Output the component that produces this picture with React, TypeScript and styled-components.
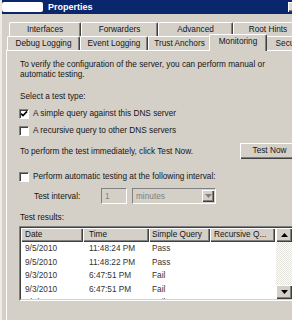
import React from 'react';
import styled, { createGlobalStyle, css } from 'styled-components';

const FACE = '#d4d0c8';
const SHADOW = '#808080';
const DARK = '#404040';

type Result = { date: string; time: string; simple: string; recursive: string };

const results: Result[] = [
  { date: '9/5/2010', time: '11:48:24 PM', simple: 'Pass', recursive: '' },
  { date: '9/5/2010', time: '11:48:22 PM', simple: 'Pass', recursive: '' },
  { date: '9/3/2010', time: '6:47:51 PM', simple: 'Fail', recursive: '' },
  { date: '9/3/2010', time: '6:47:51 PM', simple: 'Fail', recursive: '' },
  { date: '9/3/2010', time: '6:47:51 PM', simple: 'Fail', recursive: '' },
];

const topTabs = [
  { label: 'Interfaces', width: 72 },
  { label: 'Forwarders', width: 77 },
  { label: 'Advanced', width: 75 },
  { label: 'Root Hints', width: 70 },
];

const bottomTabs = [
  { label: 'Debug Logging', width: 73 },
  { label: 'Event Logging', width: 68 },
  { label: 'Trust Anchors', width: 63 },
  { label: 'Monitoring', width: 54, selected: true },
  { label: 'Secu', width: 40 },
];

const columns = [
  { label: 'Date', width: 62, pad: 4 },
  { label: 'Time', width: 66, pad: 6 },
  { label: 'Simple Query', width: 61, pad: 3 },
  { label: 'Recursive Q...', width: 65, pad: 4 },
];

function CheckBox({ checked }: { checked?: boolean }) {
  return (
    <Box>
      {checked && (
        <svg width="8" height="8" viewBox="0 0 8 8">
          <path d="M1 3.6 L3 5.6 L7 1.4" fill="none" stroke="#000" strokeWidth="1.6" />
        </svg>
      )}
    </Box>
  );
}

function Arrow({ down, color = '#000' }: { down?: boolean; color?: string }) {
  return (
    <svg width="7" height="4" viewBox="0 0 7 4">
      <path d={down ? 'M0 0 H7 L3.5 4 Z' : 'M0 4 H7 L3.5 0 Z'} fill={color} />
    </svg>
  );
}

export default function App() {
  return (
    <>
      <GlobalStyle />
      <Window>
        <TitleBar>
          <Redacted />
          <Title>Properties</Title>
          <ControlButton />
        </TitleBar>

        <TabStrip>
          <TabRow $indent={7}>
            {topTabs.map((t) => (
              <Tab key={t.label} $w={t.width}>
                {t.label}
              </Tab>
            ))}
          </TabRow>
          <TabRow $indent={5}>
            {bottomTabs.map((t) => (
              <Tab key={t.label} $w={t.width} $selected={t.selected}>
                {t.label}
              </Tab>
            ))}
          </TabRow>
        </TabStrip>

        <Panel>
          <Intro>
            To verify the configuration of the server, you can perform manual or
            <br />
            automatic testing.
          </Intro>

          <Label $top={12}>Select a test type:</Label>
          <CheckRow $top={3}>
            <CheckBox checked />
            <span>A simple query against this DNS server</span>
          </CheckRow>
          <CheckRow>
            <CheckBox />
            <span>A recursive query to other DNS servers</span>
          </CheckRow>

          <ActionRow>
            <span>To perform the test immediately, click Test Now.</span>
            <Button>Test Now</Button>
          </ActionRow>

          <CheckRow $top={9}>
            <CheckBox />
            <span>Perform automatic testing at the following interval:</span>
          </CheckRow>

          <IntervalRow>
            <IntervalLabel>Test interval:</IntervalLabel>
            <Field $w={26}>1</Field>
            <Field $w={84}>
              <span>minutes</span>
              <DropButton>
                <Arrow down color={SHADOW} />
              </DropButton>
            </Field>
          </IntervalRow>

          <Label $top={9}>Test results:</Label>

          <ListOuter>
            <ListInner>
              <ListMain>
                <HeaderRow>
                  {columns.map((c) => (
                    <HeaderCell key={c.label} $w={c.width} $pad={c.pad}>
                      {c.label}
                    </HeaderCell>
                  ))}
                  <HeaderFill />
                </HeaderRow>
                {results.map((r, i) => (
                  <DataRow key={i}>
                    <Cell $w={columns[0].width} $pad={columns[0].pad}>{r.date}</Cell>
                    <Cell $w={columns[1].width} $pad={columns[1].pad}>{r.time}</Cell>
                    <Cell $w={columns[2].width} $pad={columns[2].pad}>{r.simple}</Cell>
                    <Cell $w={columns[3].width} $pad={columns[3].pad}>{r.recursive}</Cell>
                  </DataRow>
                ))}
              </ListMain>
              <ScrollBar>
                <ScrollButton>
                  <Arrow />
                </ScrollButton>
                <ScrollTrack />
                <ScrollButton>
                  <Arrow down />
                </ScrollButton>
              </ScrollBar>
            </ListInner>
          </ListOuter>
        </Panel>
      </Window>
    </>
  );
}

// Styles
const GlobalStyle = createGlobalStyle`
  html, body {
    margin: 0;
    padding: 0;
    background: ${FACE};
    overflow: hidden;
  }

  body {
    font-family: "Liberation Sans", Arial, sans-serif;
    font-size: 8.25px;
    color: #151515;
  }
`;

const raised = css`
  background: ${FACE};
  box-shadow: inset 1px 1px #fff, inset -1px -1px ${DARK}, inset -2px -2px ${SHADOW};
`;

const Window = styled.div`
  width: 300px;
  height: 320px;
  display: flex;
  flex-direction: column;
  border-left: 2px solid #ecebe4;
  box-sizing: border-box;
`;

const TitleBar = styled.div`
  height: 14px;
  display: flex;
  align-items: center;
  background: #0a266c;
  flex-shrink: 0;
`;

const Redacted = styled.div`
  width: 41px;
  height: 10px;
  border-radius: 2px;
  background: #fff;
`;

const Title = styled.span`
  margin-left: 5px;
  color: #fff;
  font-weight: bold;
  font-size: 9px;
`;

const ControlButton = styled.div`
  width: 12px;
  height: 10px;
  margin-left: auto;
  ${raised};
  background: #dcdad2;
`;

const TabStrip = styled.div`
  padding-top: 8px;
  display: flex;
  flex-direction: column;
`;

const TabRow = styled.div<{ $indent: number }>`
  display: flex;
  align-items: flex-end;
  height: 14px;
  margin-left: ${(p) => p.$indent}px;
`;

const Tab = styled.div<{ $w: number; $selected?: boolean }>`
  flex-shrink: 0;
  box-sizing: border-box;
  width: ${(p) => p.$w}px;
  height: 14px;
  line-height: 13px;
  text-align: center;
  white-space: nowrap;
  overflow: hidden;
  border-top: 1px solid #fff;
  border-left: 1px solid #fff;
  border-right: 1px solid ${DARK};
  border-radius: 2px 2px 0 0;
  box-shadow: inset -1px 0 ${SHADOW};
  background: ${FACE};

  ${(p) =>
    p.$selected &&
    css`
      position: relative;
      z-index: 1;
      width: ${p.$w + 4}px;
      height: 17px;
      line-height: 14px;
      margin: 0 -2px -1px;
    `}
`;

const Panel = styled.div`
  flex: 1;
  margin-left: 4px;
  padding: 9px 1px 0 13px;
  border-top: 1px solid #fff;
  border-left: 1px solid #fff;
  display: flex;
  flex-direction: column;
`;

const Intro = styled.div`
  line-height: 10px;
  white-space: nowrap;
`;

const Label = styled.div<{ $top: number }>`
  margin-top: ${(p) => p.$top}px;
  line-height: 10px;
`;

const CheckRow = styled.div<{ $top?: number }>`
  display: flex;
  align-items: center;
  height: 17px;
  margin-top: ${(p) => p.$top ?? 0}px;
  margin-left: -1px;
  gap: 4px;
`;

const Box = styled.div`
  width: 10px;
  height: 10px;
  box-sizing: border-box;
  display: flex;
  align-items: center;
  justify-content: center;
  background: #fff;
  border-top: 1px solid ${SHADOW};
  border-left: 1px solid ${SHADOW};
  border-bottom: 1px solid #fff;
  border-right: 1px solid #fff;
  box-shadow: inset 1px 1px ${DARK}, 1px 1px ${FACE};
`;

const ActionRow = styled.div`
  display: flex;
  align-items: center;
  justify-content: space-between;
  height: 16px;
  margin-top: 4px;
`;

const Button = styled.div`
  width: 59px;
  height: 16px;
  line-height: 15px;
  text-align: center;
  ${raised};
`;

const IntervalRow = styled.div`
  display: flex;
  align-items: center;
  gap: 5px;
  height: 16px;
  margin-top: 3px;
  padding-left: 14px;
`;

const IntervalLabel = styled.span`
  width: 62px;
`;

const Field = styled.div<{ $w: number }>`
  width: ${(p) => p.$w}px;
  height: 16px;
  box-sizing: border-box;
  display: flex;
  align-items: center;
  justify-content: space-between;
  padding-left: 3px;
  color: ${SHADOW};
  background: ${FACE};
  border-top: 1px solid ${SHADOW};
  border-left: 1px solid ${SHADOW};
  border-bottom: 1px solid #fff;
  border-right: 1px solid #fff;
`;

const DropButton = styled.div`
  width: 12px;
  height: 12px;
  margin-right: 1px;
  display: flex;
  align-items: center;
  justify-content: center;
  ${raised};
`;

const ListOuter = styled.div`
  width: 275px;
  height: 75px;
  box-sizing: border-box;
  margin-top: 3px;
  margin-left: -1px;
  border-top: 1px solid ${SHADOW};
  border-left: 1px solid ${SHADOW};
  border-bottom: 1px solid #fff;
  border-right: 1px solid #fff;
  flex-shrink: 0;
`;

const ListInner = styled.div`
  height: 100%;
  box-sizing: border-box;
  display: flex;
  border-top: 1px solid ${DARK};
  border-left: 1px solid ${DARK};
  border-bottom: 1px solid ${FACE};
  border-right: 1px solid ${FACE};
  background: #fff;
  overflow: hidden;
`;

const ListMain = styled.div`
  flex: 1;
  overflow: hidden;
`;

const HeaderRow = styled.div`
  display: flex;
  height: 14px;
`;

const HeaderCell = styled.div<{ $w: number; $pad: number }>`
  width: ${(p) => p.$w}px;
  flex-shrink: 0;
  box-sizing: border-box;
  padding-left: ${(p) => p.$pad}px;
  line-height: 14px;
  white-space: nowrap;
  overflow: hidden;
  ${raised};
`;

const HeaderFill = styled.div`
  flex: 1;
  ${raised};
`;

const DataRow = styled.div`
  display: flex;
  height: 13.5px;
  line-height: 13.5px;
  color: #333;
`;

const Cell = styled.div<{ $w: number; $pad: number }>`
  width: ${(p) => p.$w}px;
  flex-shrink: 0;
  box-sizing: border-box;
  padding-left: ${(p) => p.$pad}px;
  white-space: nowrap;
`;

const ScrollBar = styled.div`
  width: 16px;
  display: flex;
  flex-direction: column;
`;

const ScrollButton = styled.div`
  height: 14px;
  display: flex;
  align-items: center;
  justify-content: center;
  ${raised};
`;

const ScrollTrack = styled.div`
  flex: 1;
  background: repeating-conic-gradient(#fff 0 25%, #e4e2dc 0 50%) 0 0 / 2px 2px;
`;
